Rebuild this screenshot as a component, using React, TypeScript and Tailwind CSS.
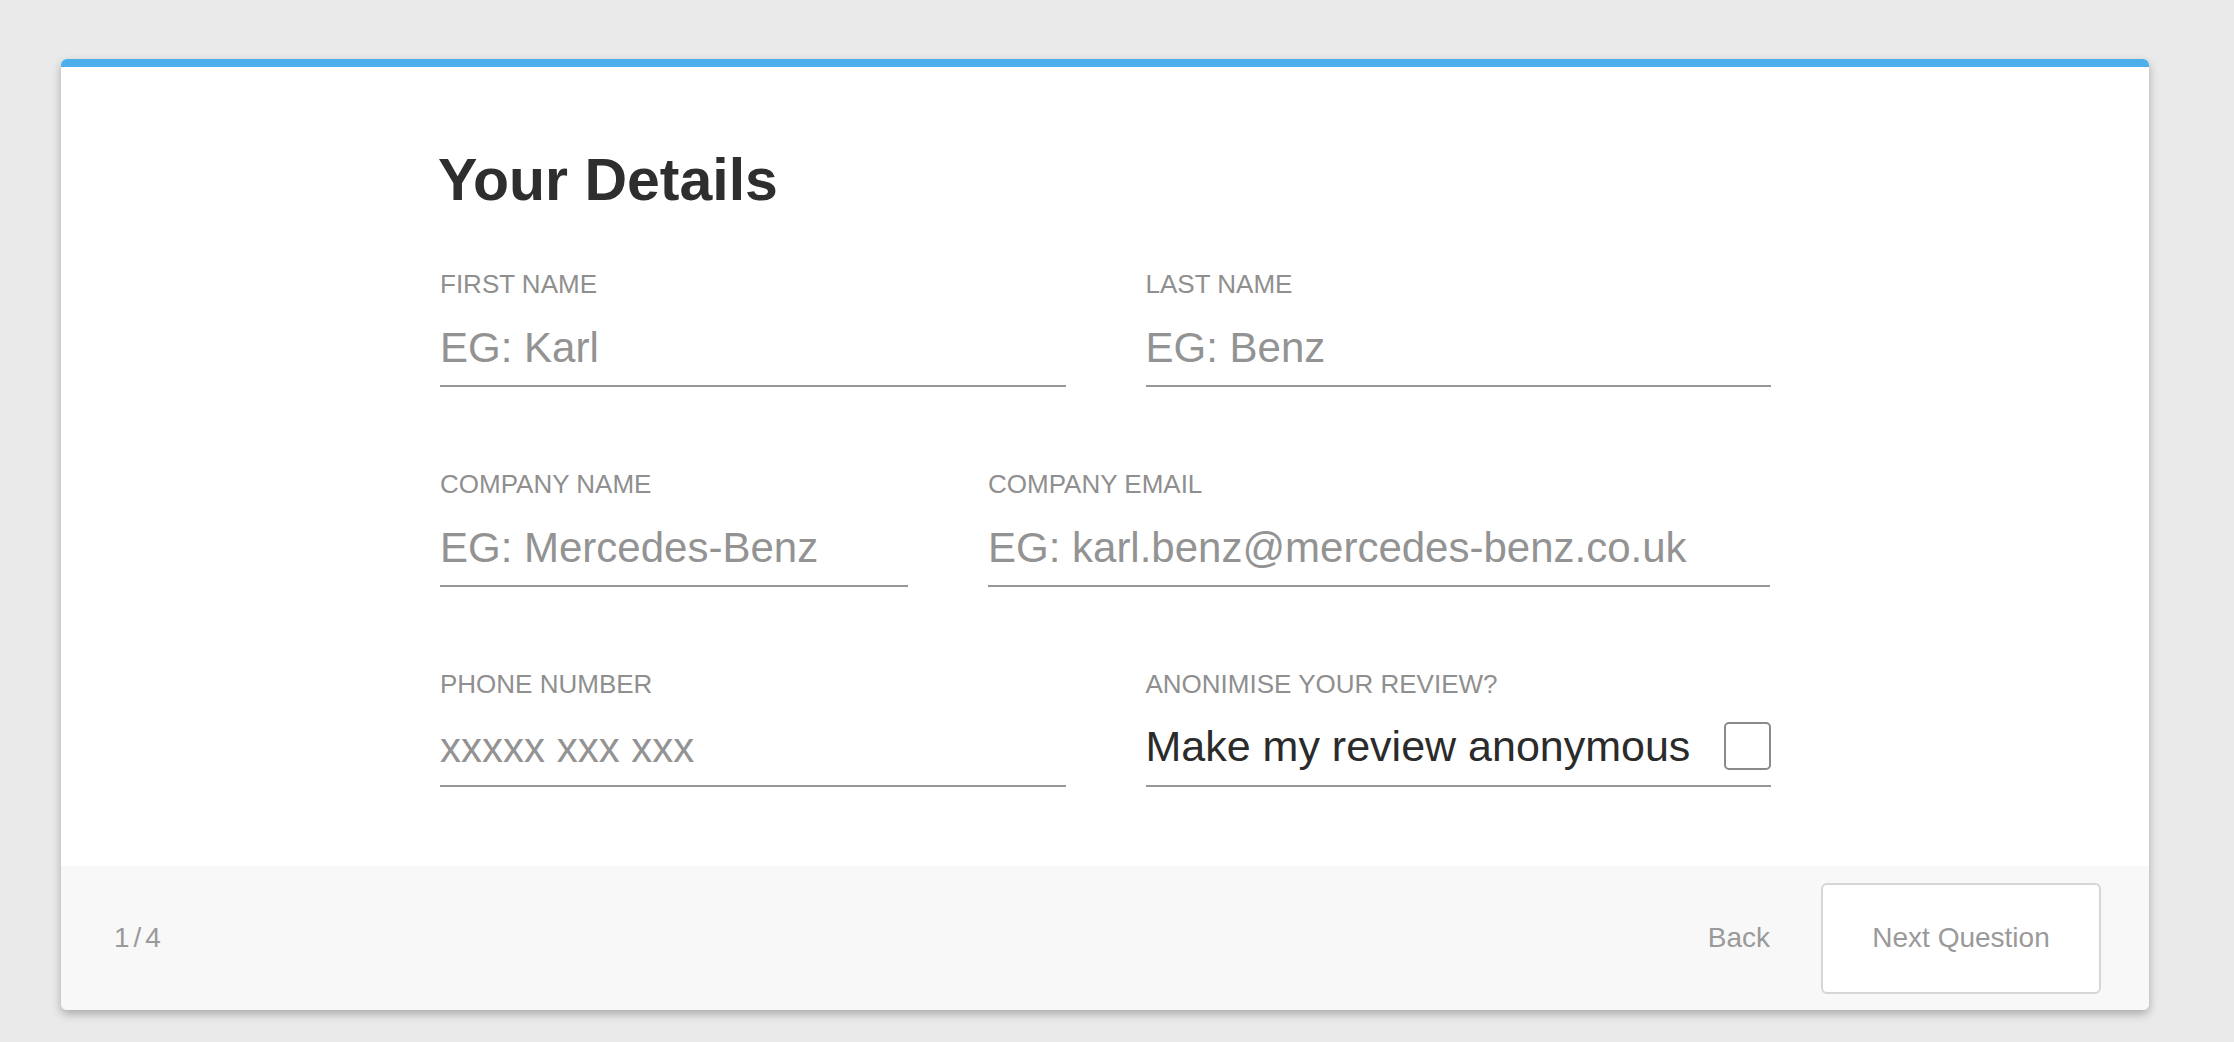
import { useState } from 'react';

const font = { fontFamily: '"Liberation Sans", Arial, sans-serif' };

function Field({ label, placeholder }: { label: string; placeholder: string }) {
  return (
    <div className="flex flex-col">
      <label className="text-[26px] leading-none text-[#8f8f8f] uppercase">{label}</label>
      <input
        type="text"
        placeholder={placeholder}
        className="mt-[30px] h-[42px] w-full bg-transparent pb-0 text-[42px] leading-none text-[#2b2b2b] outline-none placeholder:text-[#939393]"
      />
      <div className="mt-[16px] h-[2px] bg-[#979797]" />
    </div>
  );
}

export default function App() {
  const [anon, setAnon] = useState(false);

  return (
    <div className="min-h-[1042px] w-full bg-[#eaeaea] pt-[59px]" style={font}>
      <div className="ml-[61px] w-[2088px] overflow-hidden rounded-[6px] bg-white shadow-[0_4px_10px_rgba(0,0,0,0.28)]">
        {/* top accent */}
        <div className="h-[8px] bg-[#4caeea]" />

        <div className="pl-[379px] pt-[84px] pb-[79px]">
          <h1 className="-ml-[2px] text-[59px] font-bold leading-none text-[#2e2e2e]">Your Details</h1>

          <div className="mt-[61px] flex w-[1331px] flex-col gap-y-[84px]">
            <div className="grid grid-cols-2 gap-x-[80px]">
              <Field label="First Name" placeholder="EG: Karl" />
              <Field label="Last Name" placeholder="EG: Benz" />
            </div>

            <div className="grid grid-cols-[468px_782px] gap-x-[80px]">
              <Field label="Company Name" placeholder="EG: Mercedes-Benz" />
              <Field label="Company Email" placeholder="EG: karl.benz@mercedes-benz.co.uk" />
            </div>

            <div className="grid grid-cols-2 gap-x-[80px]">
              <Field label="Phone Number" placeholder="xxxxx xxx xxx" />
              <div className="flex flex-col">
                <span className="text-[26px] leading-none text-[#8f8f8f]">ANONIMISE YOUR REVIEW?</span>
                <button
                  type="button"
                  onClick={() => setAnon(!anon)}
                  className="mt-[25px] flex items-center justify-between text-left"
                >
                  <span className="text-[43px] leading-none text-[#2b2b2b]">Make my review anonymous</span>
                  <span className="flex h-[48px] w-[47px] items-center justify-center rounded-[5px] border-2 border-[#8a8a8a] text-[30px] text-[#2b2b2b]">
                    {anon ? '✓' : ''}
                  </span>
                </button>
                <div className="mt-[15px] h-[2px] bg-[#979797]" />
              </div>
            </div>
          </div>
        </div>

        {/* footer */}
        <div className="flex h-[144px] items-center justify-between bg-[#f8f8f8] pl-[53px] pr-[48px]">
          <span className="text-[28px] tracking-[4px] text-[#9a9a9a]">1/4</span>
          <div className="flex items-center gap-[51px]">
            <button className="text-[28px] text-[#9a9a9a]">Back</button>
            <button className="h-[111px] w-[280px] rounded-[6px] border-2 border-[#d6d6d6] bg-white text-[28px] text-[#9a9a9a]">
              Next Question
            </button>
          </div>
        </div>
      </div>
    </div>
  );
}
